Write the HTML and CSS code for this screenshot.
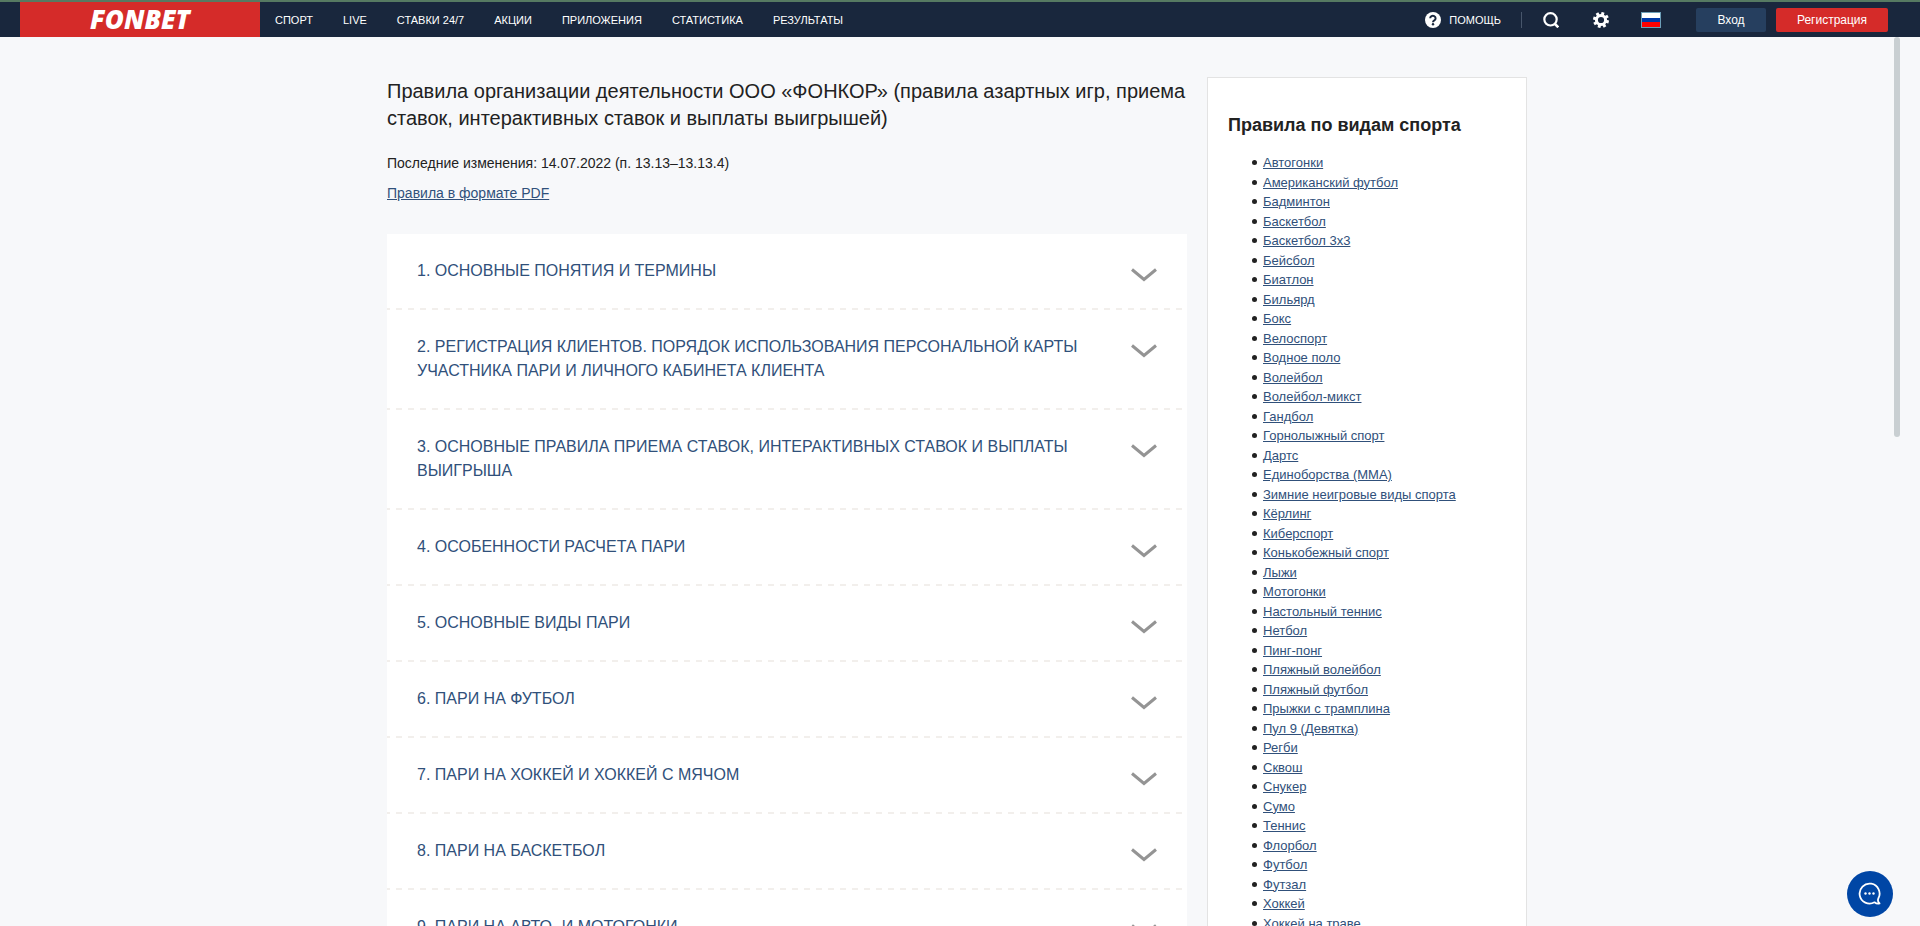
FILE: index.html
```html
<!DOCTYPE html>
<html lang="ru">
<head>
<meta charset="utf-8">
<title>Правила — FONBET</title>
<link rel="stylesheet" href="styles.css">
</head>
<body>
<header class="header">
  <a class="logo" href="#">FONBET</a>
  <nav class="nav">
    <a href="#">СПОРТ</a>
    <a href="#">LIVE</a>
    <a href="#">СТАВКИ 24/7</a>
    <a href="#">АКЦИИ</a>
    <a href="#">ПРИЛОЖЕНИЯ</a>
    <a href="#">СТАТИСТИКА</a>
    <a href="#">РЕЗУЛЬТАТЫ</a>
  </nav>
  <div class="tools">
    <a class="help" href="#">
      <svg width="16" height="16" viewBox="0 0 16 16" aria-hidden="true"><circle cx="8" cy="8" r="8" fill="#fff"/><path d="M5.200 6.300a2.700 2.400 0 1 1 4.100 2C8.400 8.800 8 9.100 8 10.200" fill="none" stroke="#19273d" stroke-width="2"/><circle cx="8" cy="12.300" r="1.200" fill="#19273d"/></svg>
      <span>ПОМОЩЬ</span>
    </a>
    <button class="tool" type="button" aria-label="Поиск">
      <svg width="16" height="16" viewBox="0 0 16 16"><circle cx="7.500" cy="7.300" r="6.200" fill="none" stroke="#fff" stroke-width="2.200"/><path d="M11.500 11.500l3.800 3.800" stroke="#fff" stroke-width="2.600"/></svg>
    </button>
    <button class="tool" type="button" aria-label="Настройки">
      <svg width="16" height="16" viewBox="0 0 16 16"><circle cx="8" cy="8" r="4.600" fill="none" stroke="#fff" stroke-width="3"/><g stroke="#fff" stroke-width="3"><path d="M8 0v3M8 13v3M0 8h3M13 8h3M2.300 2.300l2.200 2.200M11.500 11.500l2.200 2.200M13.700 2.300l-2.200 2.200M4.500 11.500l-2.200 2.200" transform="rotate(15 8 8)"/></g></svg>
    </button>
    <button class="tool" type="button" aria-label="Язык: русский">
      <svg width="20" height="16" viewBox="0 0 20 16"><path fill="#6d9fb8" d="M0 0h20v16H0z"/><path fill="#fff" d="M1 1h18v5H1z"/><path fill="#0039a6" d="M1 6h18v4H1z"/><path fill="#f00" d="M1 10h18v5H1z"/></svg>
    </button>
    <button class="btn btn-login" type="button">Вход</button>
    <button class="btn btn-register" type="button">Регистрация</button>
  </div>
</header>
<div class="page">
  <main class="content">
    <h1 class="title">Правила организации деятельности ООО «ФОНКОР» (правила азартных игр, приема ставок, интерактивных ставок и выплаты выигрышей)</h1>
    <p class="note">Последние изменения: 14.07.2022 (п. 13.13–13.13.4)</p>
    <p class="note"><a href="#">Правила в формате PDF</a></p>
    <div class="accordion">
      <button class="section" type="button"><span>1. ОСНОВНЫЕ ПОНЯТИЯ И ТЕРМИНЫ</span><svg class="chevron" viewBox="0 0 26 14"><path d="M1 1.500l12 10 12-10"/></svg></button>
      <button class="section" type="button"><span>2. РЕГИСТРАЦИЯ КЛИЕНТОВ. ПОРЯДОК ИСПОЛЬЗОВАНИЯ ПЕРСОНАЛЬНОЙ КАРТЫ УЧАСТНИКА ПАРИ И ЛИЧНОГО КАБИНЕТА КЛИЕНТА</span><svg class="chevron" viewBox="0 0 26 14"><path d="M1 1.500l12 10 12-10"/></svg></button>
      <button class="section" type="button"><span>3. ОСНОВНЫЕ ПРАВИЛА ПРИЕМА СТАВОК, ИНТЕРАКТИВНЫХ СТАВОК И ВЫПЛАТЫ ВЫИГРЫША</span><svg class="chevron" viewBox="0 0 26 14"><path d="M1 1.500l12 10 12-10"/></svg></button>
      <button class="section" type="button"><span>4. ОСОБЕННОСТИ РАСЧЕТА ПАРИ</span><svg class="chevron" viewBox="0 0 26 14"><path d="M1 1.500l12 10 12-10"/></svg></button>
      <button class="section" type="button"><span>5. ОСНОВНЫЕ ВИДЫ ПАРИ</span><svg class="chevron" viewBox="0 0 26 14"><path d="M1 1.500l12 10 12-10"/></svg></button>
      <button class="section" type="button"><span>6. ПАРИ НА ФУТБОЛ</span><svg class="chevron" viewBox="0 0 26 14"><path d="M1 1.500l12 10 12-10"/></svg></button>
      <button class="section" type="button"><span>7. ПАРИ НА ХОККЕЙ И ХОККЕЙ С МЯЧОМ</span><svg class="chevron" viewBox="0 0 26 14"><path d="M1 1.500l12 10 12-10"/></svg></button>
      <button class="section" type="button"><span>8. ПАРИ НА БАСКЕТБОЛ</span><svg class="chevron" viewBox="0 0 26 14"><path d="M1 1.500l12 10 12-10"/></svg></button>
      <button class="section" type="button"><span>9. ПАРИ НА АВТО- И МОТОГОНКИ</span><svg class="chevron" viewBox="0 0 26 14"><path d="M1 1.500l12 10 12-10"/></svg></button>
    </div>
  </main>
  <aside class="sidebar">
    <h2 class="sidebar-title">Правила по видам спорта</h2>
    <ul class="sports">
      <li><a href="#">Автогонки</a></li>
      <li><a href="#">Американский футбол</a></li>
      <li><a href="#">Бадминтон</a></li>
      <li><a href="#">Баскетбол</a></li>
      <li><a href="#">Баскетбол 3х3</a></li>
      <li><a href="#">Бейсбол</a></li>
      <li><a href="#">Биатлон</a></li>
      <li><a href="#">Бильярд</a></li>
      <li><a href="#">Бокс</a></li>
      <li><a href="#">Велоспорт</a></li>
      <li><a href="#">Водное поло</a></li>
      <li><a href="#">Волейбол</a></li>
      <li><a href="#">Волейбол-микст</a></li>
      <li><a href="#">Гандбол</a></li>
      <li><a href="#">Горнолыжный спорт</a></li>
      <li><a href="#">Дартс</a></li>
      <li><a href="#">Единоборства (ММА)</a></li>
      <li><a href="#">Зимние неигровые виды спорта</a></li>
      <li><a href="#">Кёрлинг</a></li>
      <li><a href="#">Киберспорт</a></li>
      <li><a href="#">Конькобежный спорт</a></li>
      <li><a href="#">Лыжи</a></li>
      <li><a href="#">Мотогонки</a></li>
      <li><a href="#">Настольный теннис</a></li>
      <li><a href="#">Нетбол</a></li>
      <li><a href="#">Пинг-понг</a></li>
      <li><a href="#">Пляжный волейбол</a></li>
      <li><a href="#">Пляжный футбол</a></li>
      <li><a href="#">Прыжки с трамплина</a></li>
      <li><a href="#">Пул 9 (Девятка)</a></li>
      <li><a href="#">Регби</a></li>
      <li><a href="#">Сквош</a></li>
      <li><a href="#">Снукер</a></li>
      <li><a href="#">Сумо</a></li>
      <li><a href="#">Теннис</a></li>
      <li><a href="#">Флорбол</a></li>
      <li><a href="#">Футбол</a></li>
      <li><a href="#">Футзал</a></li>
      <li><a href="#">Хоккей</a></li>
      <li><a href="#">Хоккей на траве</a></li>
    </ul>
  </aside>
  <div class="scroll-thumb"></div>
</div>
<button class="chat" type="button" aria-label="Чат">
  <svg width="24" height="24" viewBox="0 0 24 24"><path d="M16.500 20.300A10 10 0 1 1 20.300 16.500C19.600 18.200 20 20 21.500 21.500C19.500 22 18 21.500 16.500 20.300Z" fill="none" stroke="#fff" stroke-width="1.800" stroke-linejoin="round"/><g fill="#fff"><circle cx="7.500" cy="11.500" r="1.200"/><circle cx="11.500" cy="11.500" r="1.200"/><circle cx="15.500" cy="11.500" r="1.200"/></g></svg>
</button>
</body>
</html>
```
FILE: styles.css
```css
* { box-sizing: border-box; }

body {
  display: flex;
  flex-direction: column;
  height: 100vh;
  margin: 0;
  overflow: hidden;
  background: #f7f8fa;
  color: #222;
  font-family: "Liberation Sans", Arial, sans-serif;
}

button { margin: 0; border: 0; font: inherit; cursor: pointer; }
svg { display: block; }

.header {
  display: flex;
  flex: none;
  height: 37px;
  padding: 0 32px 0 20px;
  border-top: 2px solid #567a62;
  background: #19273d;
}
.logo {
  display: flex;
  align-items: center;
  justify-content: center;
  width: 240px;
  background: #d52b29;
  color: #fff;
  font: italic 800 26px/35px "Open Sans", sans-serif;
  text-decoration: none;
}
.nav { display: flex; align-items: center; gap: 30px; padding-left: 15px; }
.nav a, .help { color: #fff; font-size: 11px; line-height: 16px; text-decoration: none; }

.tools { display: flex; align-items: center; margin-left: auto; }
.help {
  display: flex;
  gap: 8px;
  padding-right: 20px;
  border-right: 1px solid #47566b;
}
.tool {
  display: flex;
  align-items: center;
  justify-content: center;
  width: 50px;
  padding: 0;
  background: none;
}
.tool:first-of-type { margin-left: 4px; }
.btn {
  height: 24px;
  padding: 0;
  border-radius: 2px;
  color: #fff;
  font-size: 12px;
}
.btn-login { width: 70px; margin-left: 20px; background: #263f5f; }
.btn-register { width: 112px; margin-left: 10px; background: #d52b29; }

.page {
  position: relative;
  display: flex;
  flex: 1;
  align-items: flex-start;
  justify-content: center;
  gap: 20px;
  min-height: 0;
  padding: 40px 6px 0 0;
  overflow: hidden;
}
.content { width: 800px; padding-top: 1px; }
.title { margin: 0 0 21px; font-size: 20px; font-weight: 400; line-height: 27px; }
.note { margin: 0 0 9px; font-size: 14px; line-height: 21px; }
a { color: #30507a; }

.accordion { margin-top: 30px; background: #fff; }
.section {
  display: flex;
  align-items: flex-start;
  justify-content: space-between;
  gap: 40px;
  width: 100%;
  padding: 25px 30px 27px;
  background: repeating-linear-gradient(90deg, #f2efec 0 3px, transparent 3px 9px, #f2efec 9px 12px) bottom / 100% 2px no-repeat;
  color: #30507a;
  font-size: 16px;
  line-height: 24px;
  text-align: left;
}
.chevron {
  flex: none;
  width: 26px;
  height: 14px;
  margin-top: 9px;
  fill: none;
  stroke: #949494;
  stroke-width: 3;
}

.sidebar {
  width: 320px;
  padding: 34px 20px 40px;
  border: 1px solid #e3e3e3;
  background: #fff;
}
.sidebar-title { margin: 0 0 14px; font-size: 18px; line-height: 27px; }
.sports { margin: 0; padding-left: 24px; font-size: 13px; line-height: 1.5; list-style: none; }
.sports li { display: flex; align-items: center; gap: 6px; }
.sports li::before { width: 5px; height: 5px; border-radius: 50%; background: #222; content: ""; }

.scroll-thumb {
  position: absolute;
  top: 0;
  right: 20px;
  width: 6px;
  height: 400px;
  border-radius: 3px;
  background: #c9cfd2;
}
.chat {
  position: fixed;
  right: 27px;
  bottom: 9px;
  display: flex;
  align-items: center;
  justify-content: center;
  width: 46px;
  height: 46px;
  padding: 0;
  border-radius: 50%;
  background: #0046a5;
}
```
